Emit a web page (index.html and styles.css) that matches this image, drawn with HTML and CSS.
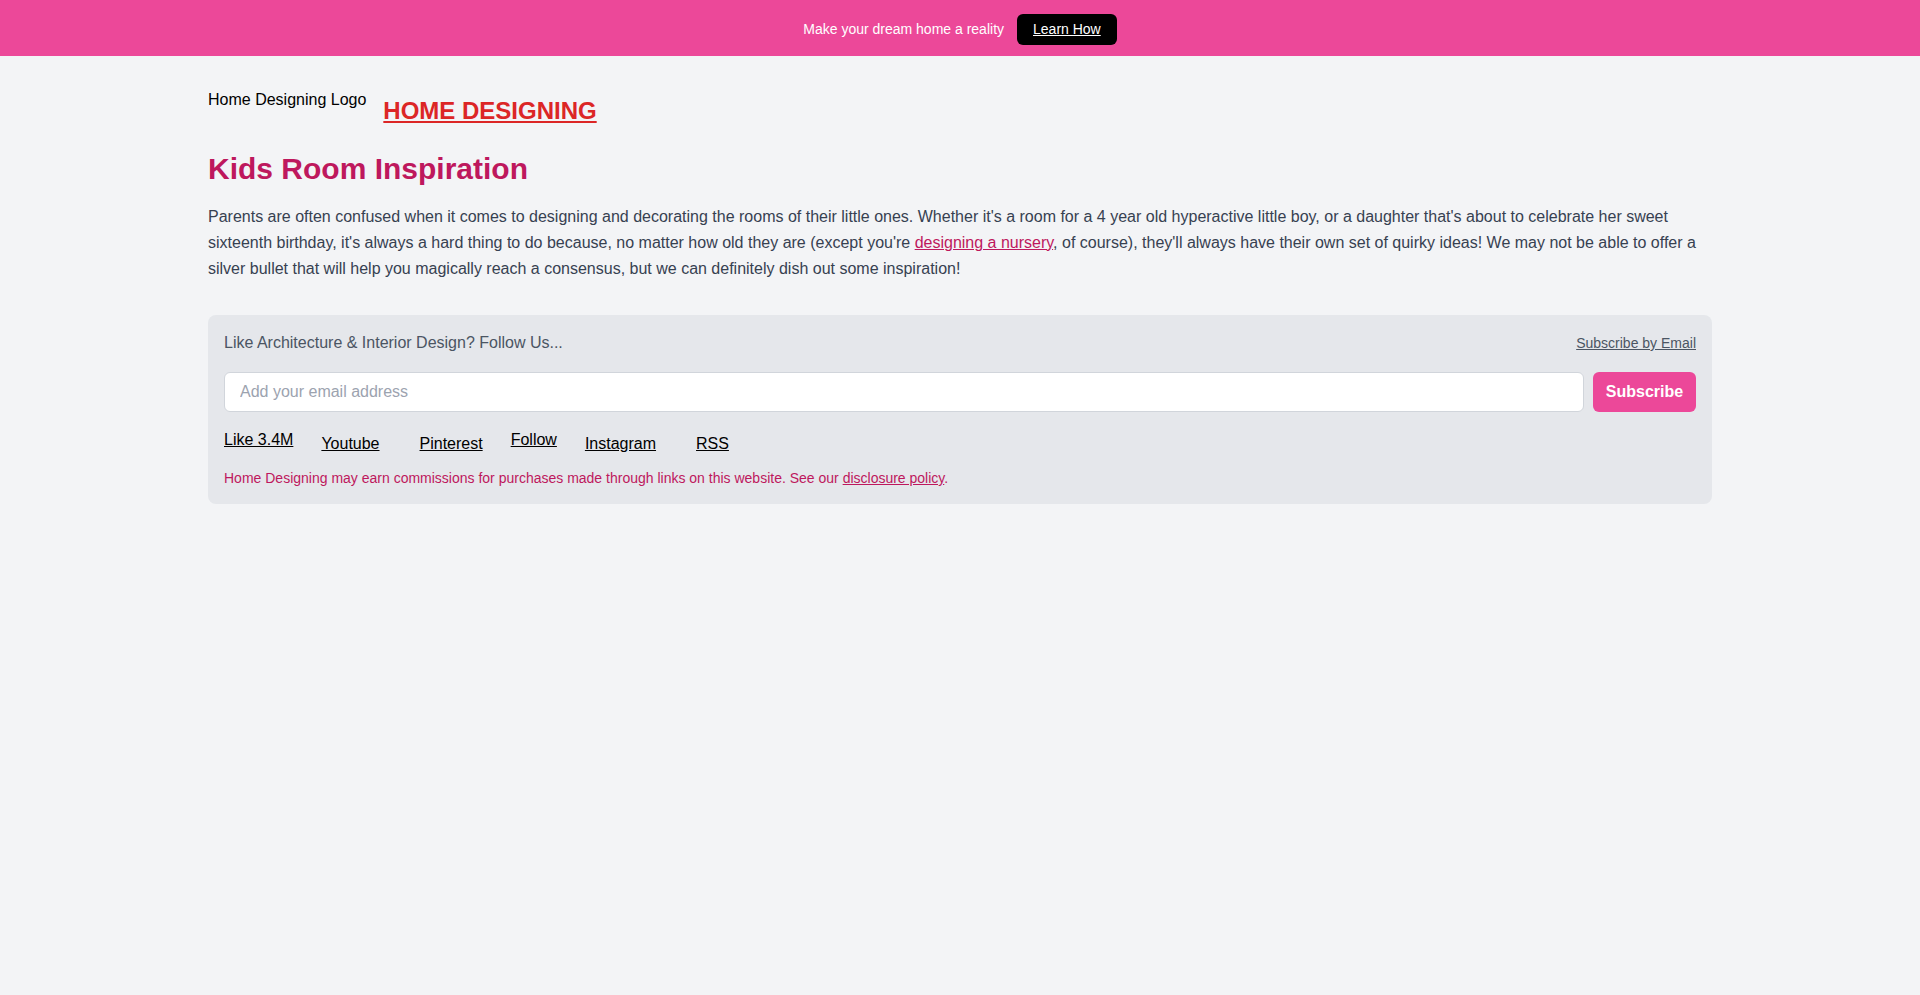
FILE: index.html
```html
<!DOCTYPE html>
<html lang="en">
<head>
<meta charset="utf-8">
<title>Kids Room Inspiration</title>
<link rel="stylesheet" href="styles.css">
</head>
<body>
<div class="promo">
  <span class="promo-text">Make your dream home a reality</span>
  <a class="promo-btn" href="#">Learn How</a>
</div>
<div class="container">
  <header class="site-header">
    <span class="logo">Home Designing Logo</span>
    <a class="brand" href="#">HOME DESIGNING</a>
  </header>
  <h1 class="page-title">Kids Room Inspiration</h1>
  <p class="intro">Parents are often confused when it comes to designing and decorating the rooms of their little ones. Whether it's a room for a 4 year old hyperactive little boy, or a daughter that's about to celebrate her sweet sixteenth birthday, it's always a hard thing to do because, no matter how old they are (except you're <a href="#">designing a nursery</a>, of course), they'll always have their own set of quirky ideas! We may not be able to offer a silver bullet that will help you magically reach a consensus, but we can definitely dish out some inspiration!</p>
  <section class="follow-box">
    <div class="follow-head">
      <span class="follow-title">Like Architecture &amp; Interior Design? Follow Us...</span>
      <a class="email-link" href="#">Subscribe by Email</a>
    </div>
    <form class="subscribe-form">
      <input class="email-input" type="email" placeholder="Add your email address">
      <button class="subscribe-btn" type="button">Subscribe</button>
    </form>
    <div class="socials">
      <a href="#" class="social">Like 3.4M</a>
      <a href="#" class="social low wide">Youtube</a>
      <a href="#" class="social low">Pinterest</a>
      <a href="#" class="social">Follow</a>
      <a href="#" class="social low wide">Instagram</a>
      <a href="#" class="social low">RSS</a>
    </div>
    <p class="disclaimer">Home Designing may earn commissions for purchases made through links on this website. See our <a href="#">disclosure policy</a>.</p>
  </section>
</div>
</body>
</html>
```

FILE: styles.css
```css
* { box-sizing: border-box; }

html, body {
  margin: 0;
  padding: 0;
}

body {
  background: #f3f4f6;
  font-family: "Liberation Sans", Arial, Helvetica, sans-serif;
  color: #000;
}

.promo {
  background: #ec4899;
  height: 56px;
  padding-top: 2px;
  display: flex;
  align-items: center;
  justify-content: center;
  gap: 13px;
}

.promo-text {
  color: #fff;
  font-size: 14px;
  line-height: 20px;
}

.promo-btn {
  background: #000;
  color: #fff;
  font-size: 14px;
  line-height: 19px;
  padding: 6px 16px;
  border-radius: 6px;
  text-decoration: underline;
}

.container {
  max-width: 1536px;
  margin: 0 auto;
  padding: 32px 16px;
}

.site-header {
  display: flex;
  align-items: flex-start;
  gap: 17px;
}

.logo {
  font-size: 16px;
  line-height: 24px;
  color: #000;
}

.brand {
  margin-top: 7px;
  font-size: 24px;
  line-height: 32px;
  font-weight: bold;
  color: #dc2626;
  text-decoration: underline;
}

.page-title {
  margin: 24px 0 0;
  font-size: 30px;
  line-height: 36px;
  font-weight: bold;
  color: #be185d;
}

.intro {
  margin: 17px 0 0;
  font-size: 16px;
  line-height: 26px;
  color: #374151;
}

.intro a {
  color: #be185d;
  text-decoration: underline;
}

.follow-box {
  margin-top: 33px;
  background: #e5e7eb;
  border-radius: 8px;
  padding: 16px;
}

.follow-head {
  display: flex;
  justify-content: space-between;
  align-items: center;
}

.follow-title {
  font-size: 16px;
  line-height: 24px;
  color: #4b5563;
}

.email-link {
  font-size: 14px;
  line-height: 20px;
  color: #4b5563;
  text-decoration: underline;
}

.subscribe-form {
  margin: 17px 0 0;
  display: flex;
  gap: 9px;
}

.email-input {
  flex: 1;
  height: 40px;
  border: 1px solid #d1d5db;
  border-radius: 6px;
  background: #fff;
  padding: 0 15px;
  font-family: inherit;
  font-size: 16px;
  color: #111827;
  outline: none;
}

.email-input::placeholder {
  color: #9ca3af;
}

.subscribe-btn {
  height: 40px;
  width: 103px;
  border: none;
  border-radius: 6px;
  background: #ec4899;
  color: #fff;
  font-family: inherit;
  font-size: 16px;
  font-weight: bold;
  padding: 0;
}

.socials {
  margin-top: 16px;
  display: flex;
  align-items: flex-start;
  gap: 28px;
}

.social {
  font-size: 16px;
  line-height: 24px;
  color: #000;
  text-decoration: underline;
}

.social.low {
  margin-top: 4px;
}

.social.wide {
  margin-right: 12px;
}

.disclaimer {
  margin: 12px 0 0;
  font-size: 14px;
  line-height: 20px;
  color: #be185d;
}

.disclaimer a {
  color: #be185d;
  text-decoration: underline;
}
```
